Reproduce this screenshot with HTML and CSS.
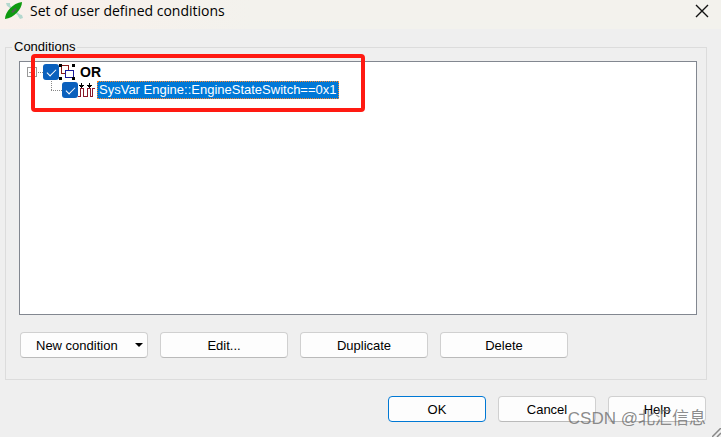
FILE: index.html
```html
<!DOCTYPE html>
<html lang="en">
<head>
    <meta charset="UTF-8">
    <meta name="viewport" content="width=device-width, initial-scale=1.0">
    <title>Set of user defined conditions</title>
    <link rel="stylesheet" href="styles.css">
</head>
<body>
    <header class="titlebar">
        <svg class="app-icon" width="20" height="20" viewBox="0 0 20 20">
            <path d="M4 4l12 11" stroke="#b5d8ce" stroke-width="2"/>
            <path d="M2 2l4 0v4l-3-1zM14 13l4 1 1 3-3 1-2-3z" fill="#b5d8ce"/>
            <path d="M1 18C1 11 9 2 18 1C18 8 10 17 1 18Z" fill="#109a10"/>
            <path d="M7 11l4-4 2 1-4 4z" fill="#526052"/>
        </svg>
        <h1 class="title">Set of user defined conditions</h1>
        <button class="close-btn" type="button" aria-label="Close">
            <svg width="14" height="14" viewBox="0 0 14 14"><path d="M1 1l12 12M13 1L1 13" stroke="#111" stroke-width="1.4"/></svg>
        </button>
    </header>

    <main class="dialog">
        <fieldset class="group">
            <legend>Conditions</legend>
            <div class="tree">
                <div class="row">
                    <svg class="branch" width="16" height="18" viewBox="0 0 16 18" shape-rendering="crispEdges">
                        <path d="M.5 4.5h9v9h-9zM2 9.5h6" fill="none" stroke="#999"/>
                        <path d="M11 9.5h5" stroke="#888" stroke-dasharray="1 1"/>
                    </svg>
                    <input class="check" type="checkbox" id="or" checked>
                    <svg class="node-icon" width="17" height="16" viewBox="0 0 17 16" shape-rendering="crispEdges">
                        <path d="M2.5 1.5h7v8h-7z" fill="#fff" stroke="#8b1a1a"/>
                        <path d="M6.500 6.500h8v7h-8z" fill="#fff" stroke="#1a1a9c"/>
                        <path d="M0 0h3v3H0zM13 0h3v3h-3zM0 13h3v3H0zM13 13h3v3h-3z"/>
                    </svg>
                    <label class="node-label bold" for="or">OR</label>
                </div>
                <div class="row child">
                    <svg class="branch" width="11" height="18" viewBox="0 0 11 18" shape-rendering="crispEdges">
                        <path d="M.5 0v9M0 9.5h11" stroke="#888" stroke-dasharray="1 1"/>
                    </svg>
                    <input class="check" type="checkbox" id="sysvar" checked>
                    <svg class="node-icon" width="17" height="16" viewBox="0 0 17 16" shape-rendering="crispEdges">
                        <path d="M0 14.500h2.500v-8h3v8h4v-8h3v8h2v-8h2" fill="none" stroke="#8b1a2a"/>
                        <path d="M3 1h1v2h2v1h-1v1h-1v1h-1v-1h-1v-1h-1v-1h2zM11 1h1v2h2v1h-1v1h-1v1h-1v-1h-1v-1h-1v-1h2z"/>
                    </svg>
                    <label class="node-label selected" for="sysvar">SysVar Engine::EngineStateSwitch==0x1</label>
                </div>
                <div class="highlight"></div>
            </div>
            <div class="actions">
                <button class="btn menu-btn" type="button">New condition
                    <svg width="8" height="4" viewBox="0 0 8 4"><path d="M0 0h8L4 4z"/></svg>
                </button>
                <button class="btn" type="button">Edit...</button>
                <button class="btn" type="button">Duplicate</button>
                <button class="btn" type="button">Delete</button>
            </div>
        </fieldset>
        <footer class="footer">
            <button class="btn default" type="button">OK</button>
            <button class="btn" type="button">Cancel</button>
            <button class="btn" type="button">Help</button>
        </footer>
    </main>

    <div class="watermark">CSDN @北汇信息</div>
    <svg class="grip" width="9" height="9" viewBox="0 0 9 9"><path d="M0 9l9-9M5 9l4-4" stroke="#888" stroke-width="1.5"/></svg>
</body>
</html>
```
FILE: styles.css
```css
* {
    box-sizing: border-box;
}

body {
    margin: 0;
    min-height: 100vh;
    position: relative;
    display: flex;
    flex-direction: column;
    background: #efefef;
    color: #000;
    font-family: "Liberation Sans", Arial, sans-serif;
    font-size: 13px;
}

.titlebar {
    display: flex;
    align-items: center;
    height: 29px;
    padding: 0 12px 8px 4px;
    background: linear-gradient(90deg, #f9f0eb, #f3f2ed 35%, #f3f2ed);
}

.title {
    flex: 1;
    margin: 0 0 0 6px;
    font-family: "Open Sans", "Noto Sans", sans-serif;
    font-size: 14px;
    font-weight: 400;
    line-height: 20px;
}

.close-btn {
    display: flex;
    padding: 0;
    border: 0;
    background: none;
}

.dialog {
    padding: 10px 14px 15px 5px;
}

.group {
    min-width: 0;
    margin: 0;
    padding: 6px 9px 21px 13px;
    border: 1px solid #dcdcdc;
}

.group legend {
    margin-left: -7px;
    padding: 0 2px;
    line-height: 16px;
}

/* fills whatever the title bar and the two button rows leave */
.tree {
    height: calc(100vh - 183px);
    min-height: 60px;
    position: relative;
    padding: 1px 7px;
    border: 1px solid #828790;
    background: #fff;
}

.row {
    display: flex;
    align-items: center;
    height: 18px;
}

.child {
    padding-left: 24px;
}

.check {
    appearance: none;
    width: 16px;
    height: 16px;
    margin: 0;
    border-radius: 3px;
    background: #0a60bd;
    display: grid;
    place-items: center;
}

.check:checked::before {
    content: "";
    width: 8px;
    height: 4px;
    border: solid #fff;
    border-width: 0 0 1px 1px;
    transform: translateY(-1px) rotate(-45deg);
}

.node-label {
    margin-left: 2px;
    padding: 0 2px;
    line-height: 18px;
}

.bold {
    font-size: 14px;
    font-weight: 700;
}

.selected {
    background: #0078d7;
    color: #fff;
    outline: 1px dotted #ff8728;
    outline-offset: -1px;
}

.highlight {
    position: absolute;
    top: -8px;
    left: 11px;
    width: 334px;
    height: 58px;
    border: 4px solid #ff1a12;
    border-radius: 4px;
    pointer-events: none;
}

.actions {
    display: flex;
    gap: 12px;
    margin-top: 17px;
    padding-left: 1px;
}

.btn {
    width: 128px;
    height: 26px;
    padding: 0;
    border: 1px solid #d0d0d0;
    border-bottom-color: #bababa;
    border-radius: 4px;
    background: #fdfdfd;
    color: #000;
    font: inherit;
}

.menu-btn {
    display: flex;
    align-items: center;
    justify-content: space-between;
    padding: 0 4px 0 15px;
}

.footer {
    display: flex;
    justify-content: flex-end;
    gap: 12px;
    padding: 16px 1px 0 0;
}

.footer .btn {
    width: 98px;
}

.footer .default {
    border-color: #0078d4;
}

.watermark {
    position: absolute;
    right: 15px;
    bottom: 7px;
    color: rgba(110, 110, 110, 0.8);
    font-family: "Liberation Sans", "Noto Sans CJK SC", sans-serif;
    font-size: 17px;
    line-height: 22px;
    pointer-events: none;
}

.grip {
    position: absolute;
    right: 0;
    bottom: 0;
}
```
